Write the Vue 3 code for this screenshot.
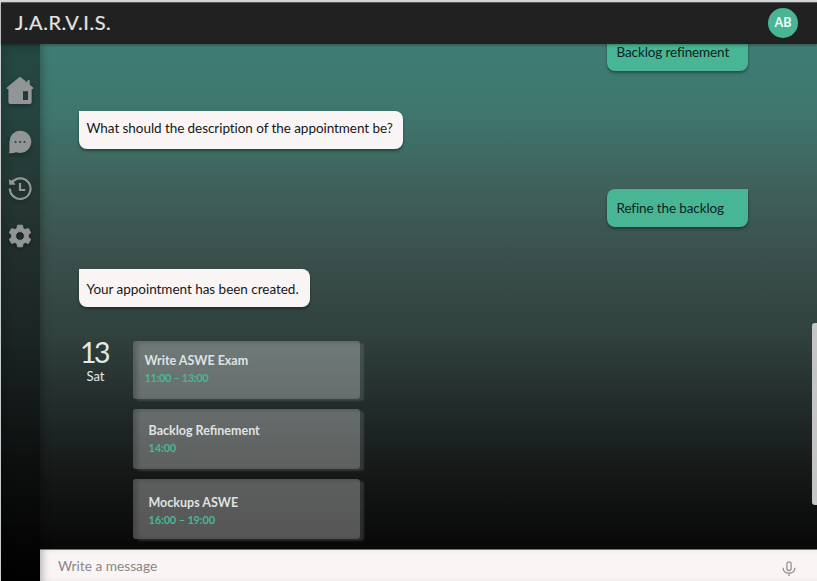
<script setup>
const messages = [
  { text: 'Backlog refinement', mine: true, cls: 'first' },
  { text: 'What should the description of the appointment be?', mine: false, cls: 'question' },
  { text: 'Refine the backlog', mine: true, cls: 'answer' },
  { text: 'Your appointment has been created.', mine: false, cls: 'created' },
]
const events = [
  { title: 'Write ASWE Exam', time: '11:00 – 13:00', cls: 'exam' },
  { title: 'Backlog Refinement', time: '14:00', cls: 'refinement' },
  { title: 'Mockups ASWE', time: '16:00 – 19:00', cls: 'mockups' },
]
</script>

<template>
  <div class="page">
    <header class="topbar">
      <h1 class="brand">J.A.R.V.I.S.</h1>
      <div class="avatar">AB</div>
    </header>
    <div class="body">
      <nav class="sidebar">
        <svg class="icon home" width="28" height="29" viewBox="0 0 28 29">
          <path fill="#919595" fill-rule="evenodd" d="M13.2 1.3 Q14 .7 14.8 1.3 L21.3 6.6 V4.5 Q22.6 3.4 23.8 4.5 V8.7 L27.2 11.6 Q27.6 12.8 26.3 13.2 H25.7 V26 Q25.7 28 23.7 28 H4.4 Q2.4 28 2.4 26 V13.2 H1.6 Q.2 12.8 .8 11.6 Z M17 15.2 V24 H22 V15.2 Z" />
        </svg>
        <svg class="icon chat" width="24" height="24" viewBox="0 0 24 24">
          <path fill="#919595" d="M12.3.7a11.1 11.1 0 1 1-4 21.5C6 23.2 3.3 23.5.8 23.2c.6-1 .8-2.4.6-4.2V12A11 11 0 0 1 12.3.7Z" />
          <g fill="#294641"><circle cx="7.6" cy="12" r="1.1" /><circle cx="12.1" cy="12" r="1.1" /><circle cx="16.5" cy="12" r="1.1" /></g>
        </svg>
        <svg class="icon history" width="24" height="24" viewBox="0 0 24 24">
          <g fill="none" stroke="#919595" stroke-width="2.2">
            <path d="M4 5.4A10.3 10.3 0 1 1 1.9 11.5" />
            <path d="M12 6v7h5.2" />
          </g>
          <path fill="#919595" d="M.9 2.2 3 3.6 5.6 2.4 6 5 7.4 7.8H1.3Z" />
        </svg>
        <svg class="icon gear" width="24" height="24" viewBox="0 0 24 24">
          <path fill="#919595" stroke="#919595" stroke-width="1" stroke-linejoin="round" fill-rule="evenodd" d="M9.6 1.2h4.8l.7 3.3 2 1.1 3.2-1.1 2.4 4.2-2.5 2.2v2.2l2.5 2.2-2.4 4.2-3.2-1.1-2 1.1-.7 3.3H9.6l-.7-3.3-2-1.1-3.2 1.1-2.4-4.2 2.5-2.2v-2.2L1.3 8.7l2.4-4.2 3.2 1.1 2-1.1Z M12 7.6a4.4 4.4 0 1 0 0 8.8 4.4 4.4 0 0 0 0-8.8Z" />
        </svg>
      </nav>
      <main class="main">
        <section class="chat-area">
          <div v-for="m in messages" :key="m.text" class="bubble" :class="[m.cls, { mine: m.mine }]">
            <span>{{ m.text }}</span>
          </div>
          <div class="agenda">
            <div class="date"><span class="day">13</span><span class="weekday">Sat</span></div>
            <div class="events">
              <article v-for="e in events" :key="e.title" class="event" :class="e.cls">
                <div class="title">{{ e.title }}</div>
                <div class="time">{{ e.time }}</div>
              </article>
            </div>
          </div>
          <div class="scroll-thumb"></div>
        </section>
        <footer class="composer">
          <span class="placeholder">Write a message</span>
          <svg class="mic" width="14" height="16" viewBox="0 0 14 16" fill="none" stroke="#969292" stroke-width="1.3">
            <rect x="4.9" y=".9" width="4.2" height="8.6" rx="2.1" />
            <path d="M1.2 6.8v1A5.8 4.4 0 0 0 12.8 7.8v-1M7 12.2V15" />
          </svg>
        </footer>
      </main>
    </div>
  </div>
</template>

<style>
body { margin: 0; overflow: hidden; }
</style>

<style scoped>
.page {
  box-sizing: border-box;
  width: 817px;
  height: 581px;
  padding: 2px 0 0 1px;
  background: #d9dddd;
  overflow: hidden;
  display: flex;
  flex-direction: column;
  font-family: Lato, "Open Sans", sans-serif;
  white-space: nowrap;
}
.topbar {
  box-sizing: border-box;
  flex: 0 0 42px;
  display: flex;
  align-items: center;
  justify-content: space-between;
  padding: 0 19px 1px 14px;
  background: #212121;
  border-top: 1px solid #5b5d5d;
  box-shadow: 0 1px 3px rgba(0, 0, 0, .35);
  z-index: 2;
}
.brand { margin: 0; padding-bottom: 2px; font-size: 20px; line-height: 24px; font-weight: 400; color: #e4e4e4; letter-spacing: .55px; -webkit-text-stroke: .2px #e4e4e4; }
.avatar {
  width: 30px;
  height: 30px;
  border-radius: 50%;
  background: #48b594;
  color: #f4fffb;
  font-size: 12.5px;
  font-weight: 700;
  line-height: 30px;
  text-align: center;
}
.body {
  flex: 1;
  min-height: 0;
  display: flex;
  background: linear-gradient(180deg, #3f7d74 0, #3e766e 70px, #3f625b 140px, #3b514d 205px, #30413e 290px, #1f2827 375px, #151817 430px, #090909 500px, #020202 537px);
}
.sidebar {
  box-sizing: border-box;
  flex: 0 0 39px;
  padding-right: 1px;
  display: flex;
  flex-direction: column;
  align-items: center;
  background: rgba(0, 0, 0, .42);
  box-shadow: inset 5px 4px 9px rgba(0, 0, 0, .12), 2px 0 8px rgba(0, 0, 0, .28);
}
.icon { flex: none; filter: drop-shadow(0 2px 2px rgba(0, 0, 0, .3)); }
.home { margin-top: 32px; }
.chat { margin-top: 25px; }
.history { margin-top: 23px; }
.gear { margin-top: 23px; }
.main { flex: 1; min-width: 0; display: flex; flex-direction: column; }
.chat-area {
  position: relative;
  box-sizing: border-box;
  flex: 0 0 505px;
  padding: 0 69px 0 38.5px;
  overflow: hidden;
  display: flex;
  flex-direction: column;
  align-items: flex-start;
}
.bubble {
  box-sizing: border-box;
  flex: none;
  height: 38px;
  padding: 0 8px;
  background: #f9f5f5;
  color: #171717;
  border-radius: 0 8px 8px 8px;
  box-shadow: 0 2px 3px rgba(0, 0, 0, .38);
  font-size: 13.5px;
  letter-spacing: -.06px;
  line-height: 34px;
}
.bubble.mine {
  align-self: flex-end;
  width: 141px;
  padding-left: 9.5px;
  border-radius: 8px 0 8px 8px;
  background: #48b594;
  color: #0b241c;
  letter-spacing: -.12px;
}
.bubble.first { margin-top: -11px; line-height: 38px; }
.question { margin-top: 40px; width: 324px; }
.bubble.answer { margin-top: 40px; line-height: 38px; }
.created { margin-top: 42px; width: 231px; line-height: 40px; letter-spacing: -.03px; }
.agenda { flex: none; display: flex; margin-top: 34px; }
.date {
  width: 33px;
  margin-right: 21.5px;
  display: flex;
  flex-direction: column;
  align-items: center;
  color: #e3e8e8;
}
.day { margin-top: -4px; font-size: 28.5px; line-height: 30px; font-weight: 400; letter-spacing: -2.5px; padding-right: 2px; }
.weekday { margin-top: 1px; padding-left: 1px; font-size: 13px; line-height: 17px; }
.events { display: flex; flex-direction: column; }
.event {
  box-sizing: border-box;
  width: 227px;
  height: 58px;
  padding: 11px 15.5px;
  border-radius: 3px;
  background: rgba(255, 255, 255, .31);
  box-shadow: inset 4px 1px 4px rgba(0, 0, 0, .2), 4px 2px 2px rgba(150, 155, 155, .22);
}
.event.exam { padding-left: 11.5px; }
.event.refinement { margin-top: 10px; height: 60px; padding-top: 13px; }
.event.mockups { margin-top: 10px; height: 60px; padding-top: 15px; }
.title { font-size: 12.5px; line-height: 18px; font-weight: 700; color: #dfe2e2; }
.time { font-size: 11px; line-height: 16px; font-weight: 700; color: #4bb596; letter-spacing: -.15px; }
.exam .time { letter-spacing: -.35px; }
.scroll-thumb {
  position: absolute;
  right: 0;
  top: 279px;
  width: 5px;
  height: 182px;
  border-radius: 3px 0 0 3px;
  background: #c5c5c5;
}
.composer {
  box-sizing: border-box;
  flex: 1;
  display: flex;
  align-items: center;
  justify-content: space-between;
  padding: 1px 21px 0 18px;
  background: #f9f5f5;
  box-shadow: inset 7px 0 8px -5px rgba(0, 0, 0, .3);
  border-top: 1px solid #777473;
}
.placeholder { font-size: 13.7px; line-height: 18px; color: #8a8686; }
.mic { margin-top: 6px; }
</style>
